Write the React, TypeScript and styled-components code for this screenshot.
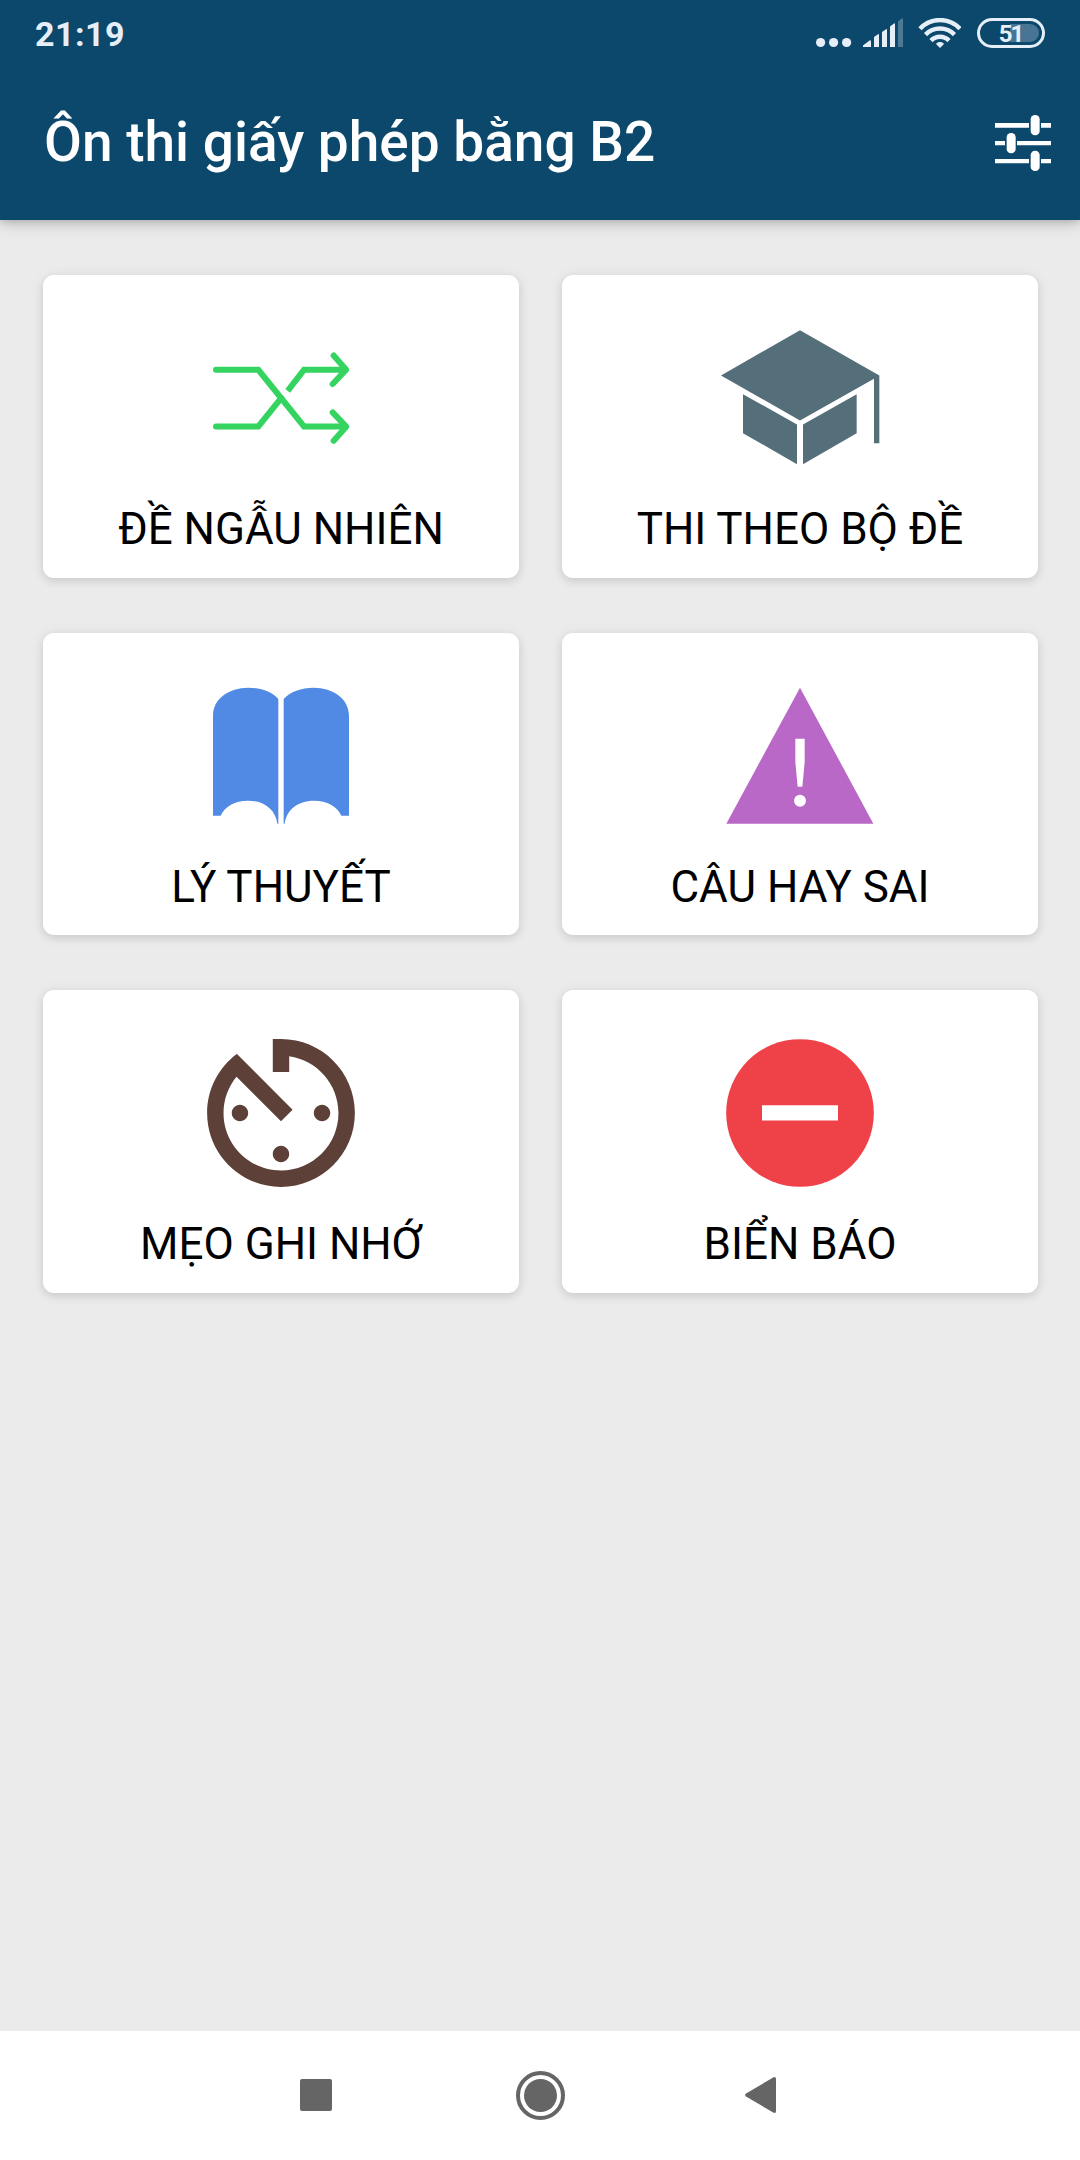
import React from 'react';
import styled, { createGlobalStyle } from 'styled-components';

const GlobalStyle = createGlobalStyle`
  *, *::before, *::after { box-sizing: border-box; }
  body { margin: 0; background: #ebebeb; font-family: Roboto, "Noto Sans", sans-serif; }
  svg { display: block; flex: none; }
`;

const Screen = styled.div`
  width: 1080px;
  height: 2160px;
  display: flex;
  flex-direction: column;
  background: #ebebeb;
`;

const Header = styled.header`
  height: 220px;
  display: flex;
  flex-direction: column;
  background: #0b486b;
  color: #fff;
  box-shadow: 0 3px 14px rgba(0, 0, 0, 0.22), 0 1px 6px rgba(0, 0, 0, 0.12);
`;

const StatusBar = styled.div`
  height: 66px;
  display: flex;
  align-items: center;
  justify-content: space-between;
  padding: 0 35px;
  color: #e6eef8;
`;

const Clock = styled.time`
  font-size: 34px;
  line-height: 40px;
  font-weight: 700;
  letter-spacing: 0.5px;
  padding-top: 2px;
`;

const StatusIcons = styled.div`
  display: flex;
  align-items: center;
`;

const Battery = styled.div`
  width: 68px;
  height: 30px;
  margin-left: 16px;
  border: 3px solid #e6eef8;
  border-radius: 15px;
  padding: 3px;
`;

const BatteryLevel = styled.div`
  height: 18px;
  border-radius: 9px;
  background: linear-gradient(to left, #487593 51%, transparent 51%);
  font-size: 24px;
  line-height: 21px;
  font-weight: 700;
  letter-spacing: -2px;
  text-align: center;
  padding-right: 1px;
`;

const Toolbar = styled.div`
  height: 154px;
  display: flex;
  align-items: center;
  justify-content: space-between;
  padding: 0 29px 0 44px;
`;

const Title = styled.h1`
  margin: 0;
  padding-bottom: 2px;
  font-size: 55px;
  line-height: 64px;
  font-weight: 500;
  white-space: nowrap;
`;

const ToolButton = styled.button`
  border: 0;
  padding: 0;
  background: none;
  color: #fff;
`;

const Menu = styled.main`
  flex: 1;
  padding: 55px 42px 0 43px;
  display: grid;
  grid-template-columns: 476px 476px;
  grid-auto-rows: 302.5px;
  gap: 55px 43px;
  align-content: start;
`;

const Card = styled.a`
  display: flex;
  flex-direction: column;
  align-items: center;
  padding-top: 23.9px;
  background: #fff;
  border-radius: 11px;
  box-shadow: 0 3px 8px rgba(0, 0, 0, 0.11), 0 1px 16px rgba(0, 0, 0, 0.05);
`;

const CardLabel = styled.span`
  margin-top: 6.3px;
  font-size: 44px;
  line-height: 53px;
  color: #000;
  white-space: nowrap;
`;

const NavBar = styled.nav`
  height: 129px;
  display: flex;
  align-items: center;
  padding: 0 0 1px 300px;
  background: #fff;
  color: #656565;
`;

const NavButton = styled.button<{ $gap?: number }>`
  border: 0;
  padding: 0;
  background: none;
  color: inherit;
  margin-left: ${(p) => p.$gap ?? 0}px;
`;

const Glyph = ({ children, color }: { children: React.ReactNode; color: string }) => (
  <svg width="198" height="198" viewBox="-1.5 -1.5 594 594" fill={color}>
    {children}
  </svg>
);

const bookPage =
  'M91.5 177.5C91.5 127.5 138.5 93.5 197.5 93.5C234.5 93.5 268.5 105.5 287.5 127.5V501.5H284.5C279.5 461.5 246.5 432.5 196.5 432.5C157.5 432.5 126.5 449.5 114.5 477.5H91.5Z';

const items = [
  {
    label: 'ĐỀ NGẪU NHIÊN',
    icon: (
      <Glyph color="none">
        <g stroke="#35d461" strokeWidth="18" strokeLinecap="round">
          <path d="M100.5 211H227.5L364.5 381H488" />
          <path d="M100.5 381H227.5L296 296" />
          <path d="M315.5 274L364.5 211H488" strokeLinecap="butt" />
          <path d="M453.5 168L491 210.5L450.5 253.5M450.5 338.5L491 381.5L453.5 423.5" strokeLinejoin="round" />
        </g>
      </Glyph>
    ),
  },
  {
    label: 'THI THEO BỘ ĐỀ',
    icon: (
      <Glyph color="#546e7a">
        <path d="M295.5 92L533.5 228V431H517.5V238L295.5 363L58.5 228Z" />
        <path d="M124.5 284L286.5 375V494L124.5 401ZM304.5 375L465.5 284V401L304.5 494Z" />
      </Glyph>
    ),
  },
  {
    label: 'LÝ THUYẾT',
    icon: (
      <Glyph color="#508ae4">
        <path d={bookPage} />
        <path d={bookPage} transform="matrix(-1 0 0 1 591 0)" />
      </Glyph>
    ),
  },
  {
    label: 'CÂU HAY SAI',
    icon: (
      <Glyph color="#b968c7">
        <path d="M295.5 93.5L515.5 501.5H74.5Z" />
        <path fill="#fff" d="M281.5 246.5H309.5V317.5L302.5 390.5H288.5L281.5 317.5Z" />
        <circle fill="#fff" cx="295.5" cy="433" r="18" />
      </Glyph>
    ),
  },
  {
    label: 'MẸO GHI NHỚ',
    icon: (
      <svg width="198" height="198" viewBox="-.06 -.06 24.12 24.12" fill="#5d4037">
        <path d="M11 17c0 .55.45 1 1 1s1-.45 1-1-.45-1-1-1-1 .45-1 1zm0-14v4h2V5.08c3.39.49 6 3.39 6 6.92 0 3.87-3.13 7-7 7s-7-3.13-7-7c0-1.68.59-3.22 1.58-4.42L12 13l1.41-1.41-6.8-6.8v.02C4.42 6.45 3 9.05 3 12c0 4.97 4.02 9 9 9 4.97 0 9-4.03 9-9s-4.03-9-9-9h-1zm7 9c0-.55-.45-1-1-1s-1 .45-1 1 .45 1 1 1 1-.45 1-1zM6 12c0 .55.45 1 1 1s1-.45 1-1-.45-1-1-1-1 .45-1 1z" />
      </svg>
    ),
  },
  {
    label: 'BIỂN BÁO',
    icon: (
      <Glyph color="#ee4248">
        <circle cx="295.5" cy="295.5" r="221.5" />
        <path fill="#fff" d="M181.5 272H409.5V318H181.5Z" />
      </Glyph>
    ),
  },
];

export default function App() {
  return (
    <Screen>
      <GlobalStyle />
      <Header>
        <StatusBar>
          <Clock>21:19</Clock>
          <StatusIcons>
            <svg width="36" height="30" viewBox="0 0 36 30" fill="currentColor">
              <circle cx="4.6" cy="24.5" r="4.6" />
              <circle cx="17.6" cy="24.5" r="4.6" />
              <circle cx="30.6" cy="24.5" r="4.6" />
            </svg>
            <svg width="62" height="30" viewBox="0 0 62 30" fill="currentColor">
              <path d="M11 29V27.6L17.5 22.5Q19 21.8 19 23.4V29Z" />
              <path d="M22 29V19L26 16.2Q27 15.8 27 17V29Z" />
              <path d="M30 29V14L34 11.2Q35 10.8 35 12V29Z" />
              <path d="M38 29V8.5L42 5.5Q43 5 43 6.3V29Z" />
              <path d="M46 29V3.5L50 .3Q51 0 51 1.2V29Z" opacity=".3" />
            </svg>
            <svg width="47" height="30" viewBox="0 0 47 30" fill="none" stroke="currentColor" strokeWidth="4.5">
              <path d="M6 10.7C17 -.8 35 -.8 46 10.7" />
              <path d="M11.5 16.6C19.5 8.5 32.5 8.5 40.5 16.6" />
              <path d="M17 22.6C22 17.4 30 17.4 35 22.6" />
              <path d="M22 26C24 23.4 28 23.4 30 26L26 30Z" fill="currentColor" stroke="none" />
            </svg>
            <Battery>
              <BatteryLevel>51</BatteryLevel>
            </Battery>
          </StatusIcons>
        </StatusBar>
        <Toolbar>
          <Title>Ôn thi giấy phép bằng B2</Title>
          <ToolButton aria-label="settings">
            <svg width="56" height="56" viewBox="0 0 168 168" fill="currentColor">
              <path d="M0 24H102V38H0ZM138 24H168V38H138ZM0 78H30V91H0ZM66 78H168V91H66ZM0 132H102V145H0ZM138 132H168V145H138Z" />
              <rect x="107" y="0" width="27" height="61" rx="13" />
              <rect x="35" y="54" width="27" height="61" rx="13" />
              <rect x="107" y="107" width="27" height="61" rx="13" />
            </svg>
          </ToolButton>
        </Toolbar>
      </Header>
      <Menu>
        {items.map((item) => (
          <Card key={item.label}>
            {item.icon}
            <CardLabel>{item.label}</CardLabel>
          </Card>
        ))}
      </Menu>
      <NavBar>
        <NavButton aria-label="recents">
          <svg width="32" height="32" viewBox="0 0 32 32" fill="currentColor">
            <rect width="32" height="32" rx="2" />
          </svg>
        </NavButton>
        <NavButton aria-label="home" $gap={184}>
          <svg width="49" height="49" viewBox="0 0 49 49" fill="currentColor">
            <circle cx="24.5" cy="24.5" r="22.5" fill="none" stroke="currentColor" strokeWidth="4" />
            <circle cx="24.5" cy="24.5" r="16.5" />
          </svg>
        </NavButton>
        <NavButton aria-label="back" $gap={180}>
          <svg width="31" height="36" viewBox="0 0 31 36" fill="currentColor">
            <path d="M28.2 .4Q31 -.8 31 2V34Q31 36.8 28.2 35.6L1 19.4Q-.8 18 1 16.6Z" />
          </svg>
        </NavButton>
      </NavBar>
    </Screen>
  );
}
